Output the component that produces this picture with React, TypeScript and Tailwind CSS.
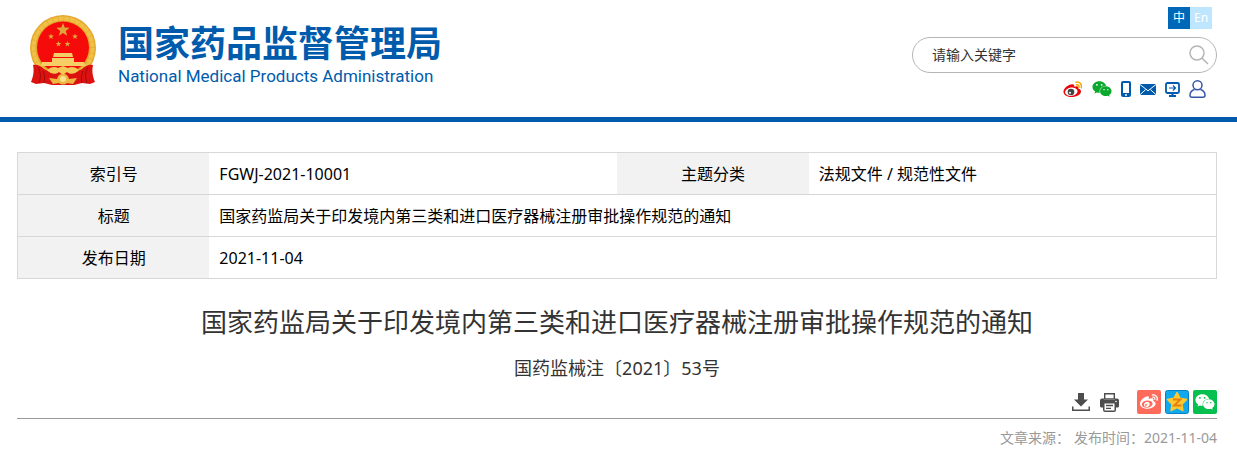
import type { ReactNode } from "react";
import { FaWeibo, FaWeixin } from "react-icons/fa";

const TITLE = "国家药监局关于印发境内第三类和进口医疗器械注册审批操作规范的通知";

const star = (cx: number, cy: number, r: number, inner = 0.42) =>
  Array.from({ length: 10 }, (_, i) => {
    const a = -Math.PI / 2 + (i * Math.PI) / 5;
    const d = i % 2 ? r * inner : r;
    return `${cx + d * Math.cos(a)},${cy + d * Math.sin(a)}`;
  }).join(" ");

function Emblem() {
  return (
    <svg viewBox="0 0 66 72" className="h-[72px] w-[66px] shrink-0" aria-hidden="true">
      <circle cx="33" cy="34" r="33" fill="#e3a92c" />
      <circle cx="33" cy="34" r="29.500" fill="none" stroke="#f0c048" strokeWidth="4" strokeDasharray="5 .6" />
      <path d="M3 51c4-1 8 1 11 4l8 4h22l8-4c3-3 7-5 11-4-1 5-1 10 2 17l-5 2-8-1-8 2H22l-8-2-8 1-5-2c3-7 3-12 2-17z" fill="#dc1210" />
      <circle cx="33" cy="33.500" r="26" fill="#f50c0a" />
      <path d="M8 53c3 5 3 11 1 16M58 53c-3 5-3 11-1 16M13 57c2 4 2 9 1 12M53 57c-2 4-2 9-1 12" fill="none" stroke="#a30b0b" />
      <polygon points={star(33, 16, 7)} fill="#dfa63a" />
      <polygon points={star(21, 22.5, 3)} fill="#dfa63a" />
      <polygon points={star(45, 22.5, 3)} fill="#dfa63a" />
      <polygon points={star(28.5, 30, 3)} fill="#dfa63a" />
      <polygon points={star(37.5, 30, 3)} fill="#dfa63a" />
      <path d="M24 39h18l1 4H23zM22 44h22v4h10l1 4H11l1-4h10z" fill="#f5cf66" />
      <path d="M17 56c3-3 8-4 11-2l5-2 5 2c3-2 8-1 11 2-3 4-9 5-12 2l-4 3-4-3c-3 3-9 2-12-2z" fill="#f3c856" />
      <path d="M19 64l8 1c1-4 3-5 6-5s5 1 6 5l8-1-4 6-6-1c-2 2-6 2-8 0l-6 1z" fill="#ecb640" />
      <circle cx="33" cy="65" r="3" fill="#fae08c" />
    </svg>
  );
}

function WeiboIcon() {
  return (
    <svg viewBox="0 0 20 18" className="h-[18px] w-5" aria-hidden="true">
      <path d="M8 4.500C4.500 5 0 9 .5 12.300 1 15.500 4.500 17 8.500 17c5 0 9.500-2.500 9.500-5.500 0-1.700-1.200-2.500-2.700-3 .5-2.500-1.300-2.800-4-1.800C11.500 4.800 10.500 4 8 4.500z" fill="#e9070c" />
      <ellipse cx="8.300" cy="11.700" rx="6.300" ry="4.200" fill="#fff" transform="rotate(-8 8.300 11.700)" />
      <circle cx="8" cy="12" r="3.300" fill="#444" />
      <circle cx="7" cy="12.800" r="1" fill="#fff" />
      <path d="M13 2.200c3.500-.8 6.200 2 5.300 5.500M13.500 4.800c1.800-.3 2.900.9 2.500 2.500" fill="none" stroke="#f7a400" strokeWidth="1.500" strokeLinecap="round" />
    </svg>
  );
}

function PhoneIcon() {
  return (
    <svg viewBox="0 0 10 16" className="h-4 w-[10px]" aria-hidden="true">
      <rect width="10" height="16" rx="2" fill="#005bac" />
      <path d="M2 2h6v10H2z" fill="#fff" />
      <circle cx="5" cy="14" r="1" fill="#fff" />
    </svg>
  );
}

function MailIcon() {
  return (
    <svg viewBox="0 0 16 11" className="h-[11px] w-4" aria-hidden="true">
      <path d="M0 0h16v11H0z" fill="#005bac" />
      <path d="M0 .5l8 6.300L16 .5M0 10.700l5.500-5M16 10.700l-5.500-5" fill="none" stroke="#fff" strokeWidth="1" />
    </svg>
  );
}

function ScreenIcon() {
  return (
    <svg viewBox="0 0 15 15" className="h-[15px] w-[15px]" aria-hidden="true">
      <rect x="1" y="1" width="13" height="10" rx="1.500" fill="none" stroke="#005bac" strokeWidth="1.800" />
      <path d="M4 6h6.500M8 3.500L10.500 6 8 8.500" fill="none" stroke="#005bac" strokeWidth="1.200" />
      <path d="M6.500 11h2v2H11v2H4v-2h2.500z" fill="#005bac" />
    </svg>
  );
}

function UserIcon() {
  return (
    <svg viewBox="0 0 17 18" className="h-[18px] w-[17px]" fill="none" stroke="#3557a7" strokeWidth="1.500" aria-hidden="true">
      <circle cx="8.500" cy="5.300" r="4.500" />
      <path d="M5.500 9.500C2.500 10.500 1 12.800 1 15.200c0 1.300.6 2 2 2h11c1.400 0 2-.7 2-2 0-2.400-1.500-4.700-4.500-5.700" />
    </svg>
  );
}

function DownloadIcon() {
  return (
    <svg viewBox="0 0 18 18" className="h-[18px] w-[18px]" fill="#4d4d4d" aria-hidden="true">
      <path d="M6 0h6v6.500h4L9 13.500 2 6.500h4z" />
      <path d="M0 13.500h1.500v3h15v-3H18V18H0z" />
    </svg>
  );
}

function PrintIcon() {
  return (
    <svg viewBox="0 0 19 19" className="h-[19px] w-[19px]" aria-hidden="true">
      <path d="M4.700.7h9.600V6H4.700z" fill="#fff" stroke="#4d4d4d" strokeWidth="1.400" />
      <path d="M2 5.500h2V7h11V5.500h2a2 2 0 0 1 2 2V13a1.500 1.500 0 0 1-1.500 1.500H16V17a2 2 0 0 1-2 2H5a2 2 0 0 1-2-2v-2.500H1.500A1.500 1.500 0 0 1 0 13V7.500a2 2 0 0 1 2-2z" fill="#4d4d4d" />
      <path d="M4.500 10.500h10v7h-10z" fill="#fff" />
      <path d="M6 12.500h7M6 15.300h5" stroke="#4d4d4d" strokeWidth="1.300" />
      <circle cx="16" cy="8.500" r=".8" fill="#fff" />
    </svg>
  );
}

function QzoneIcon() {
  return (
    <svg viewBox="0 0 24 24" className="h-6 w-6" aria-hidden="true">
      <rect x=".5" y=".5" width="23" height="23" rx="2" fill="#10a9ee" stroke="#087fc0" />
      <polygon points={star(12, 12.5, 10, 0.52)} fill="#fdc92c" stroke="#fdc92c" strokeWidth="1.500" strokeLinejoin="round" />
      <path d="M8 9.500h7.500L9 15.500h7.500" fill="none" stroke="#e87d10" strokeWidth="1.800" />
    </svg>
  );
}

function IconLink({ label, children }: { label: string; children: ReactNode }) {
  return (
    <a href="#" aria-label={label} className="flex items-center">
      {children}
    </a>
  );
}

function Header() {
  return (
    <header className="flex h-[122px] items-start justify-between border-b-5 border-[#005bac] pr-5 pl-[30px]">
      <a href="#" className="mt-[14px] flex items-start gap-[22px] text-[#005bac]">
        <Emblem />
        <div className="mt-[9px]">
          <div className="text-[36px] leading-[42px] font-bold">国家药品监督管理局</div>
          <div className="font-['Roboto'] text-[17px] leading-[22px]">
            National Medical Products Administration
          </div>
        </div>
      </a>

      <div className="flex w-[305px] flex-col items-end">
        <div className="mt-[7px] mr-[5px] flex text-xs leading-[22px] text-white">
          <a href="#" className="w-[22px] bg-[#0068b7] text-center">中</a>
          <a href="#" className="w-[22px] bg-[#bfe6ff] text-center">En</a>
        </div>
        <form className="mt-2 flex h-9 w-full items-center rounded-full border border-[#b5b5b5] pr-[7px] pl-[19px]">
          <input
            type="text"
            aria-label="请输入关键字"
            placeholder="请输入关键字"
            className="min-w-0 flex-1 text-sm text-[#333] outline-none placeholder:text-[#333] placeholder:opacity-100"
          />
          <button type="button" aria-label="搜索">
            <svg viewBox="0 0 20 20" className="h-5 w-5" fill="none" stroke="#b5b5b5" strokeWidth="1.500">
              <circle cx="8" cy="8" r="7" />
              <path d="M13 13l6 6" />
            </svg>
          </button>
        </form>
        <div className="mt-[7px] mr-[11px] flex h-[18px] items-center gap-[9px]">
          <IconLink label="微博"><WeiboIcon /></IconLink>
          <IconLink label="微信"><FaWeixin className="h-5 w-5 text-[#0aa82d]" /></IconLink>
          <IconLink label="手机版"><PhoneIcon /></IconLink>
          <IconLink label="邮箱"><MailIcon /></IconLink>
          <IconLink label="电脑版"><ScreenIcon /></IconLink>
          <IconLink label="个人中心"><UserIcon /></IconLink>
        </div>
      </div>
    </header>
  );
}

function InfoTable() {
  const th = "w-[16%] bg-[#f2f2f2] text-center font-normal";
  const td = "pl-[10px] text-left";
  return (
    <table className="w-full table-fixed border-collapse border border-[#d7d7d7] text-base text-black">
      <tbody>
        <tr className="h-[42px] border-b border-[#d7d7d7]">
          <th scope="row" className={th}>索引号</th>
          <td className={`${td} w-[34%]`}>FGWJ-2021-10001</td>
          <th scope="row" className={th}>主题分类</th>
          <td className={`${td} w-[34%]`}>法规文件 / 规范性文件</td>
        </tr>
        <tr className="h-[42px] border-b border-[#d7d7d7]">
          <th scope="row" className={th}>标题</th>
          <td className={td} colSpan={3}>{TITLE}</td>
        </tr>
        <tr className="h-[42px]">
          <th scope="row" className={th}>发布日期</th>
          <td className={td} colSpan={3}>2021-11-04</td>
        </tr>
      </tbody>
    </table>
  );
}

export default function App() {
  return (
    <div className="bg-white font-['Noto_Sans','Noto_Sans_CJK_SC',sans-serif]">
      <Header />
      <main className="pt-[30px] pr-5 pl-[17px]">
        <InfoTable />
        <h1 className="mt-6 text-center text-[26px] leading-[38px] text-[#333]">{TITLE}</h1>
        <p className="mt-[13px] text-center text-lg leading-7 text-[#333]">国药监械注〔2021〕53号</p>
        <div className="mt-2 flex items-center justify-end border-b border-[#999] pb-1">
          <button type="button" aria-label="下载" className="mr-[10px]"><DownloadIcon /></button>
          <button type="button" aria-label="打印" className="mr-[18px]"><PrintIcon /></button>
          <div className="flex gap-1">
            <a href="#" aria-label="分享到微博" className="flex h-6 w-6 items-center justify-center rounded-xs bg-[#ff6b5b] text-white">
              <FaWeibo className="h-[18px] w-[18px]" />
            </a>
            <IconLink label="分享到QQ空间"><QzoneIcon /></IconLink>
            <a href="#" aria-label="分享到微信" className="flex h-6 w-6 items-center justify-center rounded-xs bg-[#05bf4e] text-white">
              <FaWeixin className="h-5 w-5" />
            </a>
          </div>
        </div>
        <div className="mt-2 flex justify-end gap-1 text-sm leading-[22px] text-[#999]">
          <span>文章来源：</span>
          <span>发布时间：2021-11-04</span>
        </div>
      </main>
    </div>
  );
}
